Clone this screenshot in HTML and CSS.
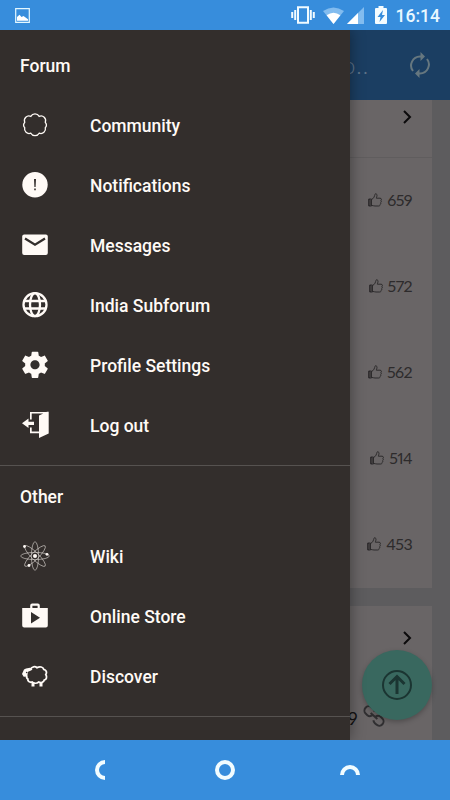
FILE: index.html
```
<!DOCTYPE html>
<html lang="en">
<head>
<meta charset="utf-8">
<title>Forum</title>
<link rel="stylesheet" href="styles.css">
</head>
<body>
<svg class="defs" aria-hidden="true">
  <symbol id="thumb" viewBox="0 0 14 14"><path d="M.7 6h2.800v7H.7zM3.500 6.500C6 5.500 6.500 3 7 1.200 7.500.3 9 .8 9 2.200 9 3.500 8.300 4.800 8.300 5.200h3.700c1.700 0 1.800 1.700.9 2.300.6.600.5 1.600-.2 2 .3.800 0 1.600-.6 1.900 0 1-.5 1.600-1.300 1.600H7c-1.400 0-2-.5-3.500-.6"/><path d="M1 6.500h1.200v6H1z"/></symbol>
  <symbol id="chevron" viewBox="0 0 10 14"><path d="M2 1l6 6-6 6"/></symbol>
</svg>
<header class="status">
  <svg width="15" height="15" viewBox="0 0 15 15"><path d="M.7.7h13.600v13.600H.7z" fill="none" stroke="#e4f8ff" stroke-width="1.200"/><path d="M2 12.800V9l2.500-2.200 2 2.200 2-1 4.500 3.300v1.500z" fill="#fff"/></svg>
  <div class="status-icons">
    <svg class="vibrate" width="24" height="18" viewBox="0 0 24 18"><path d="M7 1.300h10v15.400H7zM4.200 4v10M1.200 6v6M19.800 4v10M22.800 6v6" fill="none" stroke="#f1fbff" stroke-width="2"/></svg>
    <svg class="wifi" width="21" height="17" viewBox="0 0 21 17"><path d="M0 4Q10.500-3 21 4L10.500 17z" fill="#82bcef"/><path d="M3.600 8.300Q10.500 3 17.400 8.300L10.500 17z" fill="#fff"/></svg>
    <svg class="signal" width="17" height="17" viewBox="0 0 17 17"><path d="M17 0v17H0z" fill="#82bcef"/><path d="M11 6v11H0z" fill="#fff"/></svg>
    <svg class="battery" width="12" height="18" viewBox="0 0 12 18"><path d="M3.500 0h5v2H11q1 0 1 1v14q0 1-1 1H1q-1 0-1-1V3q0-1 1-1h2.500z" fill="#f4fcff"/><path d="M8 4L2.500 11h3L4.500 16 10 9H7z" fill="#378ddc"/></svg>
    <span class="clock">16:14</span>
  </div>
</header>
<main class="screen">
  <div class="toolbar">
    <span class="toolbar-title">o..</span>
    <svg width="22" height="26" viewBox="0 0 22 26"><g fill="none" stroke="#66777f" stroke-width="2"><path d="M4 19A9 9 0 0 1 11 4.500h2M18 7a9 9 0 0 1-7 14.500H9"/></g><path d="M11.500 0l4.500 4.500L11.500 9zM10.500 17L6 21.500l4.500 4.500z" fill="#66777f"/></svg>
  </div>
  <div class="feed">
    <section class="card">
      <div class="card-head first"><svg class="chevron"><use href="#chevron"/></svg></div>
      <div class="row"><svg class="thumb"><use href="#thumb"/></svg><span>659</span></div>
      <div class="row"><svg class="thumb"><use href="#thumb"/></svg><span>572</span></div>
      <div class="row"><svg class="thumb"><use href="#thumb"/></svg><span>562</span></div>
      <div class="row"><svg class="thumb"><use href="#thumb"/></svg><span>514</span></div>
      <div class="row"><svg class="thumb"><use href="#thumb"/></svg><span>453</span></div>
    </section>
    <section class="card">
      <div class="card-head"><svg class="chevron"><use href="#chevron"/></svg></div>
      <div class="link-row"><span>9</span><svg width="22" height="22" viewBox="0 0 22 22"><g transform="rotate(42 11 11)" fill="none" stroke="#302f31" stroke-width="2"><path d="M8.500 7.500Q7.500 6.200 5.500 6.200H3.500a4.300 4.300 0 0 0 0 8.600h2q3 0 4-3.500M13.500 14.500q1 1.300 3 1.300h2a4.300 4.300 0 0 0 0-8.600h-2q-3 0-4 3.500M6.500 11h9"/></g></svg></div>
    </section>
  </div>
  <div class="fab"><svg width="32" height="32" viewBox="0 0 32 32" fill="none" stroke="#1b3532"><circle cx="16" cy="16" r="14" stroke-width="2"/><path d="M16 25V8M8.500 15L16 7.500l7.500 7.500" stroke-width="3"/></svg></div>
  <nav class="drawer">
    <section class="group">
      <h2>Forum</h2>
      <a class="item"><svg viewBox="0 0 30 30"><path d="M10.800 6.400A4.800 4.800 0 0 1 19.200 6.400A4.600 4.600 0 0 1 25.300 12.300A4.200 4.200 0 0 1 25.300 17.700A4.600 4.600 0 0 1 19.200 23.200A4.800 4.800 0 0 1 10.800 23.200A4.600 4.600 0 0 1 4.700 17.700A4.200 4.200 0 0 1 4.700 12.300A4.600 4.600 0 0 1 10.800 6.400z" class="line"/></svg>Community</a>
      <a class="item"><svg viewBox="0 0 30 30"><circle cx="15" cy="14.700" r="12.700"/><path d="M14 9h2l-.4 8h-1.200zM14.200 18.500h1.600v1.700h-1.600z" class="cut"/></svg>Notifications</a>
      <a class="item"><svg viewBox="0 0 30 30"><rect x="2.200" y="4.500" width="25.600" height="20.500" rx="2"/><path d="M5 8.500l10 6.300 10-6.300" class="cut-line"/></svg>Messages</a>
      <a class="item"><svg viewBox="0 0 30 30"><g class="globe"><circle cx="15" cy="14.700" r="11.500"/><ellipse cx="15" cy="14.700" rx="5" ry="11.500"/><path d="M4 11h22M4 18.500h22"/></g></svg>India Subforum</a>
      <a class="item"><svg viewBox="0 0 24 24"><path transform="translate(-.6 -.8) scale(1.050)" d="M19.430 12.980c.04-.32.07-.64.07-.98s-.03-.66-.07-.98l2.110-1.650c.19-.15.24-.42.12-.64l-2-3.460c-.12-.22-.39-.3-.61-.22l-2.490 1c-.52-.4-1.080-.73-1.690-.98l-.38-2.650C14.460 2.180 14.250 2 14 2h-4c-.25 0-.46.18-.49.42l-.38 2.650c-.61.25-1.170.59-1.690.98l-2.490-1c-.23-.09-.49 0-.61.22l-2 3.460c-.13.22-.07.49.12.64l2.110 1.650c-.04.32-.07.65-.07.98s.03.66.07.98l-2.110 1.650c-.19.15-.24.42-.12.64l2 3.460c.12.22.39.3.61.22l2.490-1c.52.4 1.080.73 1.690.98l.38 2.650c.03.24.24.42.49.42h4c.25 0 .46-.18.49-.42l.38-2.650c.61-.25 1.170-.59 1.690-.98l2.490 1c.23.09.49 0 .61-.22l2-3.460c.12-.22.07-.49-.12-.64l-2.110-1.650zM12 15.500c-1.930 0-3.500-1.570-3.500-3.500s1.570-3.500 3.500-3.500 3.500 1.570 3.500 3.500-1.570 3.500-3.500 3.500z"/></svg>Profile Settings</a>
      <a class="item"><svg viewBox="0 0 30 30"><path d="M19 5.500l8-3.700h1.700V23.500L19 28zM10 2h18.500v1.500H11.700V9.500H10zM10 17.500h1.700v4H19v1.700h-9zM2 13.300L8.500 8.500v3.200H14v3.200H8.500v3.200z"/></svg>Log out</a>
    </section>
    <section class="group">
      <h2>Other</h2>
      <a class="item"><svg viewBox="0 0 30 30"><g class="atom"><ellipse cx="15" cy="15" rx="14.300" ry="3.600"/><ellipse cx="15" cy="15" rx="14.300" ry="3.600" transform="rotate(45 15 15)"/><ellipse cx="15" cy="15" rx="14.300" ry="3.600" transform="rotate(90 15 15)"/><ellipse cx="15" cy="15" rx="14.300" ry="3.600" transform="rotate(135 15 15)"/></g><circle cx="15" cy="15" r="2"/><circle cx="4.500" cy="5.500" r="1.400"/><circle cx="27" cy="13.300" r="1.400"/><circle cx="9" cy="24.500" r="1.400"/></svg>Wiki</a>
      <a class="item"><svg viewBox="0 0 30 30"><path d="M2.200 7h8V4.500q0-2 2-2h5.600q2 0 2 2V7h8v17.500q0 2-2 2H4.200q-2 0-2-2zM12.400 7h5.200V4.700h-5.200zM11 11v11.500l9-5.700z" fill-rule="evenodd"/></svg>Online Store</a>
      <a class="item"><svg viewBox="0 0 30 30"><path d="M10.500 8C12 5.500 15 5 17 6.700c3-1.700 6-.7 6.700 1.600 2.600.6 3.600 3.200 2.100 5.200 1.500 2.500.7 4.700-1.500 5.500-.5 2.300-3.500 3.200-5.500 2-2 1.600-5 1.600-6.700 0-2.500.8-4.500-.8-4.300-3-1.200-.8-1.500-2-1-3.500" class="wool"/><path d="M2 13L4 8.500 6 7.500 10 6.700l2.500 1.800-1.500 1-3 1.300-.8 4.700-3.500.2zM11.500 21h3v4.500h-3zM19.500 21h3v4.500h-3z"/><circle cx="6.700" cy="11.500" r=".8" class="cut"/></svg>Discover</a>
    </section>
  </nav>
</main>
<footer class="navbar">
  <svg viewBox="0 0 24 24"><path d="M17 4A8 8 0 0 0 17 20"/></svg>
  <svg viewBox="0 0 24 24"><circle cx="12" cy="12" r="8"/></svg>
  <svg viewBox="0 0 24 24"><path d="M4 17A8 8 0 0 1 20 17"/></svg>
</footer>
</body>
</html>
```

FILE: styles.css
```
* { box-sizing: border-box; }
body {
  margin: 0;
  width: 450px;
  height: 800px;
  display: flex;
  flex-direction: column;
  overflow: hidden;
  font-family: Roboto, sans-serif;
  background: #378ddc;
}
svg { display: block; flex: none; }
.defs { position: absolute; width: 0; height: 0; }
.status {
  height: 30px;
  flex: none;
  display: flex;
  align-items: center;
  justify-content: space-between;
  padding: 0 10px 0 15px;
}
.status-icons { display: flex; align-items: center; }
.wifi { margin-left: 8px; }
.signal { margin-left: 3px; }
.battery { margin-left: 11px; }
.clock { margin-left: 9px; font-size: 17.5px; line-height: 30px; padding-top: 1px; font-weight: 500; color: #e9f8ff; }
.screen {
  position: relative;
  height: 710px;
  flex: none;
  overflow: hidden;
  background: #5d5c5e;
}
.toolbar {
  height: 70px;
  display: flex;
  align-items: center;
  justify-content: flex-end;
  gap: 40px;
  padding-right: 19px;
  background: #1b3e62;
}
.toolbar-title { font: 300 23px/70px Lato, sans-serif; letter-spacing: 1px; color: #60758a; }
.feed { display: flex; flex-direction: column; gap: 18px; width: 432px; }
.card { background: #696566; }
.card-head { height: 73px; padding: 25px 20px 0 0; display: flex; justify-content: flex-end; }
.card-head.first { height: 58px; padding-top: 10px; border-bottom: 1px solid #605d5e; }
.chevron { width: 10px; height: 14px; fill: none; stroke: #0b0a0b; stroke-width: 2; }
.row {
  height: 86px;
  padding: 0 20px 2px 0;
  display: flex;
  align-items: center;
  justify-content: flex-end;
  gap: 5px;
  font: 16px/20px Lato, sans-serif;
  font-variant-numeric: proportional-nums;
  letter-spacing: -.6px;
  color: #2d2b2c;
}
.thumb { width: 14px; height: 14px; fill: none; stroke: #2d2b2c; stroke-width: 1; }
.link-row {
  height: 61px;
  display: flex;
  justify-content: flex-end;
  gap: 5px;
  padding: 26px 47px 0 0;
  font: 18px/26px Lato, sans-serif;
  color: #121112;
}
.link-row svg { overflow: visible; }
.fab {
  position: absolute;
  left: 362px;
  top: 620px;
  width: 70px;
  height: 70px;
  border-radius: 50%;
  display: flex;
  align-items: center;
  justify-content: center;
  background: #39685f;
  box-shadow: 0 2px 5px rgba(0, 0, 0, .25);
}
.drawer {
  position: absolute;
  inset: 0 auto 0 0;
  width: 350px;
  padding-top: 5px;
  background: #332e2c;
  color: #fffaf6;
  box-shadow: 0 0 14px rgba(0, 0, 0, .4);
}
.group { border-bottom: 1px solid #565250; padding-bottom: 10px; }
.group h2 { margin: 0; padding: 0 20px; height: 60px; font-size: 17.5px; font-weight: 500; line-height: 62px; }
.item { display: flex; align-items: center; gap: 40px; height: 60px; padding: 2px 0 0 20px; font-size: 17.5px; font-weight: 500; }
.item svg { width: 30px; height: 30px; margin-top: -2px; fill: #fffaf6; }
.item .line { fill: none; stroke: #fffaf6; stroke-width: 1.3; }
.item .cut { fill: #332e2c; }
.item .cut-line { fill: none; stroke: #332e2c; stroke-width: 2.2; }
.globe { fill: none; stroke: #fffaf6; stroke-width: 2.3; }
.atom { fill: none; stroke: #c9c4c0; stroke-width: .7; }
.item .wool { fill: none; stroke: #fffaf6; stroke-width: 1.8; }
.navbar { height: 60px; display: flex; align-items: center; justify-content: space-between; padding: 0 88px; }
.navbar svg { width: 24px; height: 24px; fill: none; stroke: #f1fcff; stroke-width: 4; }
```
